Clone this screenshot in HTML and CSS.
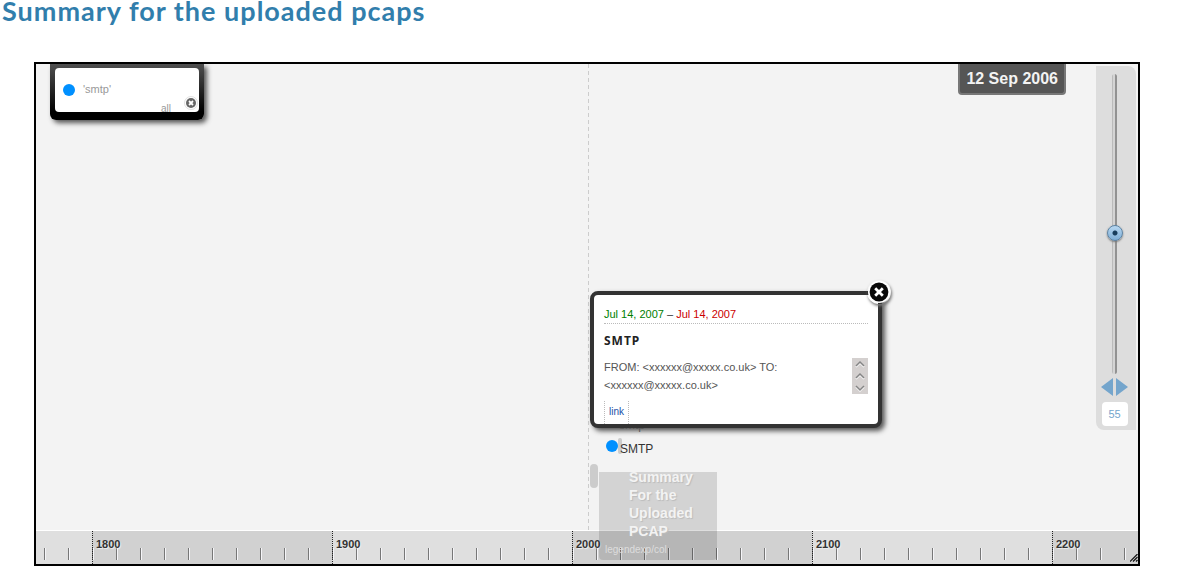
FILE: index.html
```html
<!DOCTYPE html>
<html lang="en">
<head>
<meta charset="utf-8">
<title>Summary for the uploaded pcaps</title>
<link rel="stylesheet" href="styles.css">
</head>
<body>
<h1 class="page-title">Summary for the uploaded pcaps</h1>
<main class="timeline">
  <div class="canvas">
    <div class="center-line"></div>

    <div class="hidden-event">smtp</div>
    <div class="event">
      <span class="span-bar"></span>
      <span class="dot"></span>
      <span class="event-title">SMTP</span>
    </div>
    <div class="footer-handle"></div>

    <aside class="legend">
      <div class="legend-body">
        <button class="legend-item" type="button"><span class="dot"></span>'smtp'</button>
        <a class="legend-all" href="#all">all</a>
        <button class="legend-close" type="button" aria-label="Close legend">
          <svg viewBox="0 0 14 14" width="14" height="14"><circle cx="7" cy="7" r="6.5" fill="#fff" stroke="#ccc" stroke-width=".6"/><circle cx="7" cy="7" r="5" fill="#666"/><path d="M5 5l4 4M9 5l-4 4" stroke="#fff" stroke-width="1.8"/></svg>
        </button>
      </div>
    </aside>

    <div class="focus-date">12 Sep 2006</div>

    <div class="zoom">
      <input class="zoom-slider" type="range" min="0" max="100" value="47" aria-label="Zoom">
      <div class="pan">
        <button class="pan-button" type="button" aria-label="Earlier"><svg viewBox="0 0 12 18" width="12" height="18"><path d="M12 0v18L0 9z" fill="#74a5cc"/></svg></button>
        <button class="pan-button" type="button" aria-label="Later"><svg viewBox="0 0 12 18" width="12" height="18"><path d="M0 0v18l12-9z" fill="#74a5cc"/></svg></button>
      </div>
      <output class="zoom-level">55</output>
    </div>

    <article class="popup">
      <button class="popup-close" type="button" aria-label="Close">
        <svg viewBox="0 0 24 24" width="24" height="24"><circle cx="12" cy="12" r="11" fill="#fff"/><circle cx="12" cy="12" r="9.4" fill="#080808"/><path d="M8.2 8.2l7.6 7.6M15.8 8.2l-7.6 7.6" stroke="#fff" stroke-width="2.8"/></svg>
      </button>
      <p class="dates"><span class="start">Jul 14, 2007</span> – <span class="end">Jul 14, 2007</span></p>
      <h2 class="popup-title">SMTP</h2>
      <div class="description">
        <p class="addresses">FROM: &lt;xxxxxx@xxxxx.co.uk&gt; TO: &lt;xxxxxx@xxxxx.co.uk&gt;</p>
        <div class="scroller">
          <svg viewBox="0 0 16 36" width="16" height="36" fill="none" stroke-width="1.5"><path d="M4 9l4-4 4 4M4 21l4-4 4 4M4 29l4 4 4-4" stroke="#fff"/><path d="M4 8l4-4 4 4M4 20l4-4 4 4M4 28l4 4 4-4" stroke="#858585"/></svg>
        </div>
      </div>
      <a class="popup-link" href="#link">link</a>
    </article>
  </div>

  <div class="ruler">
    <div class="century lead"></div>
    <div class="century dark">1800</div>
    <div class="century">1900</div>
    <div class="century dark">2000</div>
    <div class="century">2100</div>
    <div class="century dark last">2200</div>
  </div>

  <section class="title-card">
    <h2 class="card-title">Summary For the Uploaded PCAP</h2>
    <p class="card-note">legendexp/col</p>
  </section>
  <svg class="resize" viewBox="0 0 8 8" width="8" height="8"><path d="M0 7.5L7.5 0M3 7.5L7.5 3M6 7.5L7.5 6" stroke="#111" stroke-width="1.2"/></svg>
</main>
</body>
</html>
```
FILE: styles.css
```css
* { box-sizing: border-box; }
body {
  margin: 0;
  background: #fff;
  font-family: "Liberation Sans", Arial, sans-serif;
}
h1, h2, p { margin: 0; }
button {
  padding: 0;
  border: 0;
  background: none;
  font: inherit;
  color: inherit;
  cursor: pointer;
}
svg { display: block; }

.page-title {
  margin: 0 0 40px 2px;
  color: #317eac;
  font: bold 27px/22px Lato, sans-serif;
  letter-spacing: 1px;
}

.timeline {
  position: relative;
  display: flex;
  flex-direction: column;
  margin: 0 37px 0 34px;
  border: 2px solid #000;
  background: #f3f3f3;
  overflow: hidden;
}
.canvas { position: relative; min-height: 466px; }
.center-line {
  position: absolute;
  top: 0;
  bottom: 0;
  left: 552px;
  width: 1px;
  background: repeating-linear-gradient(#ccc 0 4px, transparent 4px 7px);
}
.dot {
  width: 12px;
  height: 12px;
  border-radius: 50%;
  background: #0090ff;
}

.legend {
  position: absolute;
  top: 0;
  left: 14px;
  width: 154px;
  padding: 4px 5px 8px;
  border-radius: 0 0 6px 6px;
  background: linear-gradient(#505050, #000 85%);
  box-shadow: 3px 3px 5px #555;
}
.legend-body {
  position: relative;
  height: 44px;
  padding: 14px 8px;
  border-radius: 4px;
  background: #fff;
  color: #999;
  font-size: 11px;
  overflow: hidden;
}
.legend-item { display: flex; align-items: center; gap: 8px; line-height: 15px; }
.legend-all {
  position: absolute;
  bottom: 0;
  right: 28px;
  color: #999;
  font-size: 10px;
  line-height: 6px;
  text-decoration: none;
}
.legend-close { position: absolute; right: 1px; bottom: 2px; }

.focus-date {
  position: absolute;
  top: 0;
  right: 72px;
  padding: 0 6px;
  border: 2px solid #777;
  border-top: 0;
  border-radius: 0 0 4px 4px;
  background: #555;
  color: #f3f3f3;
  font-size: 16px;
  font-weight: bold;
  line-height: 29px;
}

.zoom {
  position: absolute;
  top: 2px;
  right: 2px;
  display: flex;
  flex-direction: column;
  align-items: center;
  width: 40px;
  padding: 8px 3px 4px 0;
  border-radius: 0 8px 0 8px;
  background: #ddd;
}
.zoom-slider {
  appearance: none;
  writing-mode: vertical-lr;
  direction: rtl;
  width: 16px;
  height: 300px;
  margin: 0;
  background: transparent;
}
.zoom-slider::-webkit-slider-runnable-track {
  width: 5px;
  height: 300px;
  border-radius: 3px;
  background: linear-gradient(90deg, #bbb 0 1px, #d4d4d4 1px 3px, #929292 3px);
}
.zoom-slider::-webkit-slider-thumb {
  appearance: none;
  width: 16px;
  height: 16px;
  margin-left: -5px;
  border: 1px solid #5d83a3;
  border-radius: 50%;
  background: radial-gradient(circle, #173d5c 0 2px, transparent 3px), linear-gradient(#b8d8f2, #7eaed6);
  box-shadow: 0 1px 2px #777;
}
.pan { display: flex; gap: 3px; margin: 4px 0 6px; }
.pan-button { width: 12px; height: 18px; }
.zoom-level {
  width: 26px;
  border-radius: 4px;
  background: #fff;
  color: #74a5cc;
  font-size: 11px;
  line-height: 24px;
  text-align: center;
}

.popup {
  position: absolute;
  top: 227px;
  left: 554px;
  width: 292px;
  padding: 10px 10px 0;
  border: 4px solid #333;
  border-radius: 8px;
  background: #fff;
  box-shadow: 3px 3px 5px #555;
  color: #555;
  font-size: 11px;
}
.popup-close { position: absolute; top: -15px; right: -13px; border-radius: 50%; box-shadow: 1px 2px 3px #777; }
.dates {
  border-bottom: 1px dotted #bbb;
  color: #333;
  line-height: 18px;
}
.start { color: green; }
.end { color: #c00; }
.popup-title {
  margin: 8px 0;
  color: #222;
  font: bold 12px/18px "Noto Sans", sans-serif;
  letter-spacing: 1px;
}
.description { display: flex; justify-content: space-between; line-height: 18px; }
.addresses { width: 220px; }
.scroller { width: 16px; height: 36px; background: #d4d0cf; }
.popup-link {
  display: block;
  width: 25px;
  margin-top: 7px;
  border: 1px dotted #bbb;
  border-width: 0 1px;
  color: #2050a8;
  font-size: 10px;
  line-height: 22px;
  padding-bottom: 1px;
  text-align: center;
  text-decoration: none;
}

.hidden-event { position: absolute; top: 353px; left: 583px; color: #666; font-size: 12px; line-height: 16px; }
.event { position: absolute; top: 375px; left: 570px; display: flex; height: 18px; }
.event .dot { margin-top: 1px; z-index: 1; }
.span-bar {
  position: absolute;
  top: -1px;
  left: 12px;
  width: 4px;
  height: 16px;
  border-radius: 2px;
  background: #ccc;
}
.event-title { z-index: 1; margin-left: 2px; color: #333; font-size: 12px; line-height: 20px; }
.footer-handle {
  position: absolute;
  top: 400px;
  left: 554px;
  width: 8px;
  height: 24px;
  border-radius: 4px;
  background: #ccc;
}

.ruler { display: flex; height: 34px; border-top: 1px solid #fff; }
.century {
  --ground: #dfdfdf;
  flex: 0 0 240px;
  padding: 4px 0 0 3px;
  border-left: 1px dotted #222;
  background:
    repeating-linear-gradient(90deg, #777 0 1px, #f5f5f8 1px 2px, transparent 2px 24px) 0 17px / 100% 12px no-repeat border-box,
    var(--ground) border-box;
  color: #333;
  font-size: 11px;
  font-weight: bold;
  line-height: 18px;
  text-shadow: 1px 1px 1px #eee;
}
.dark { --ground: #d1d1d1; }
.lead {
  flex-basis: 56px;
  border-left: 0;
  background: repeating-linear-gradient(90deg, transparent 0 8px, #777 8px 9px, #f5f5f8 9px 10px, transparent 10px 24px) 0 17px / 100% 12px no-repeat, var(--ground);
}
.last { flex: 1 1 0; }

.title-card {
  position: absolute;
  left: 563px;
  bottom: 4px;
  width: 118px;
  height: 88px;
  padding: 0 0 0 6px;
  border-radius: 0 0 4px 4px;
  background: rgba(0, 0, 0, .13);
  color: #f3f3f3;
}
.card-title {
  width: 80px;
  margin: -4px 0 0 24px;
  font-size: 14px;
  line-height: 18px;
  text-shadow: 1px 1px 1px #bbb;
}
.card-note { color: #ddd; font-size: 10px; line-height: 20px; }
.resize { position: absolute; right: 0; bottom: 2px; }
```
